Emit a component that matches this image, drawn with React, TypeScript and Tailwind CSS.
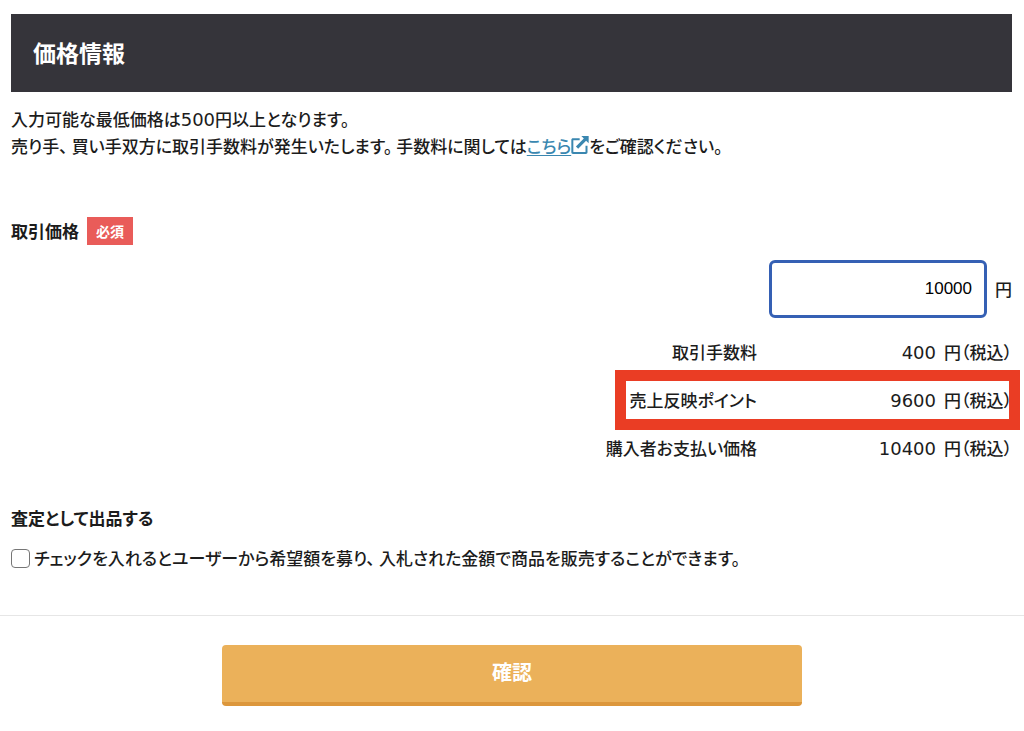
import { useState } from 'react'
import type { ReactNode } from 'react'

const FEE_RATE = 0.04

function Digits({ children }: { children: ReactNode }) {
  return <span className="font-['DejaVu_Sans',sans-serif] text-[18px] font-normal">{children}</span>
}

// proportional punctuation sits tight, give it a little room
function Mark({ children }: { children: ReactNode }) {
  return <span className="mr-1">{children}</span>
}

function ExternalIcon() {
  return (
    <svg viewBox="2 1.8 20.8 21.6" className="mb-1 inline-block size-[18px] align-text-bottom" fill="currentColor" aria-hidden="true">
      <path d="M14 1.800H22.800V10.600L19.700 7.500 10.200 17 7.500 14.300 17 4.800z" />
      <path d="M19 21H4.400V6.800H12V4.400H4C2.800 4.400 2 5.200 2 6.400v15c0 1.200.8 2 2 2h15.400c1.200 0 2-.8 2-2v-8H19z" />
    </svg>
  )
}

export default function App() {
  const [price, setPrice] = useState('10000')
  const [assess, setAssess] = useState(false)

  const amount = Number(price) || 0
  const fee = Math.floor(amount * FEE_RATE)

  const rows = [
    { label: '取引手数料', value: fee, highlight: false },
    { label: '売上反映ポイント', value: amount - fee, highlight: true },
    { label: '購入者お支払い価格', value: amount + fee, highlight: false },
  ]

  return (
    <main className="bg-white pt-[14px] pb-6 font-['Noto_Sans_CJK_JP',sans-serif] text-[17px] leading-[26px] font-medium text-[#1c1c1c] [font-feature-settings:'palt']">
      <form onSubmit={e => e.preventDefault()}>
        <div className="pr-3 pl-[11px]">
          <h2 className="bg-[#35343a] px-[22px] pt-[22px] pb-6 text-[23px] leading-8 font-bold text-white">価格情報</h2>

          <p className="mt-[14px]">
            入力可能な最低価格は<Digits>500</Digits>円以上となります。
            <br />
            売り手<Mark>、</Mark>買い手双方に取引手数料が発生いたします<Mark>。</Mark>手数料に関しては
            <a href="#fee" className="text-[#3a87b0] underline underline-offset-2">
              こちら<ExternalIcon />
            </a>
            をご確認ください。
          </p>

          <div className="mt-[58px] flex items-center gap-2">
            <label htmlFor="price" className="font-bold">取引価格</label>
            <span className="bg-[#e95c59] px-[9px] text-[14px] leading-7 font-bold text-white">必須</span>
          </div>

          <div className="mt-[15px] flex items-center justify-end gap-2">
            <input
              id="price"
              type="text"
              inputMode="numeric"
              value={price}
              onChange={e => setPrice(e.target.value)}
              className="h-[58px] w-[218px] rounded-md border-3 border-[#3560b4] px-3 text-right font-['Liberation_Sans',sans-serif] text-[17px] font-normal text-black outline-none"
            />
            <span>円</span>
          </div>

          <table className="mt-[10px] ml-auto">
            <tbody>
              {rows.map(row => (
                <tr key={row.label} className="h-12">
                  <th scope="row" className="p-0 text-right font-medium">{row.label}</th>
                  <td className="relative w-[255px] p-0 text-right">
                    <Digits>{row.value}</Digits>
                    <span className="ml-2">円（税込）</span>
                    {row.highlight && (
                      <div className="pointer-events-none absolute -inset-y-[6px] -right-2 w-[405px] border-11 border-[#ea3d24]" />
                    )}
                  </td>
                </tr>
              ))}
            </tbody>
          </table>

          <h3 className="mt-[33px] font-bold">査定として出品する</h3>
          <label className="mt-[14px] flex items-center gap-1">
            <input
              type="checkbox"
              checked={assess}
              onChange={e => setAssess(e.target.checked)}
              className="size-[19px] shrink-0 appearance-none rounded-[4px] border border-[#767676] bg-white checked:bg-[#3560b4]"
            />
            <span>
              チェックを入れるとユーザーから希望額を募り<Mark>、</Mark>入札された金額で商品を販売することができます。
            </span>
          </label>
        </div>

        <div className="mt-11 flex justify-center border-t border-[#e6e6e6] px-4 pt-[29px]">
          <button
            type="submit"
            className="w-full max-w-[580px] rounded border-b-4 border-[#dc973c] bg-[#ebb15a] pt-[11px] pb-[14px] text-[20px] leading-8 font-bold text-white"
          >
            確認
          </button>
        </div>
      </form>
    </main>
  )
}
